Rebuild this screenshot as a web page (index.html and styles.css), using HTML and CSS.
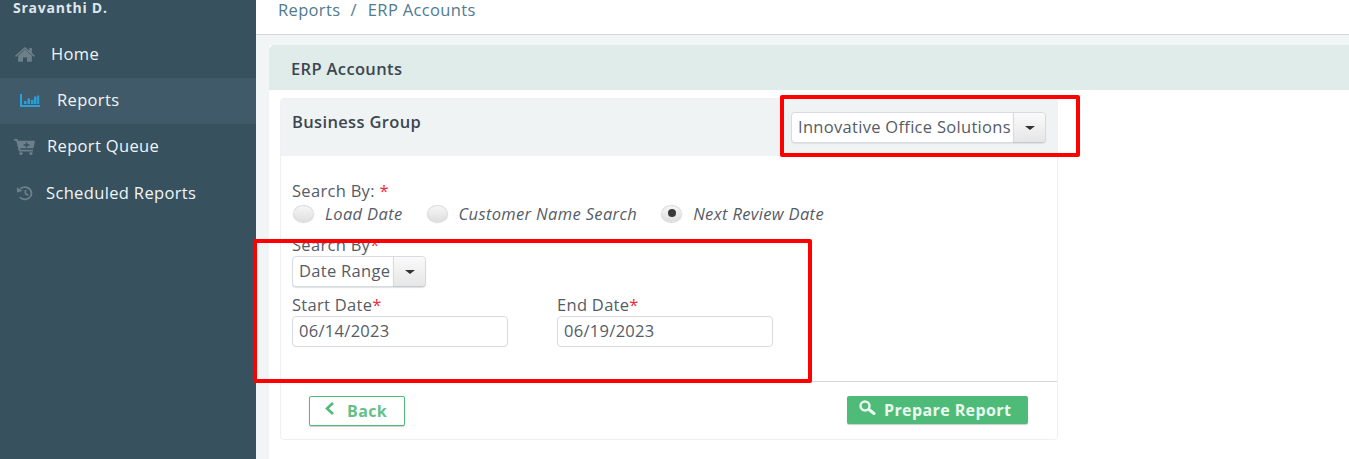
FILE: index.html
```html
<!DOCTYPE html>
<html lang="en">
<head>
<meta charset="utf-8">
<title>ERP Accounts</title>
<link rel="stylesheet" href="styles.css">
</head>
<body>
<div class="app">
  <aside class="sidebar">
    <div class="user">Sravanthi D.</div>
    <nav class="nav">
      <a class="nav-item item-home">
        <svg class="nav-icon" width="20" height="15" viewBox="0 0 23 16" preserveAspectRatio="none"><path fill="#6d7f89" d="M11.5 2.6 3.6 9.2v5.6c0 .5.4.9.9.9h4.7v-4.4h4.6v4.4h4.700c.5 0 .9-.4.9-.9V9.2z"/><path fill="#6d7f89" d="M11.5 0 0 9.4l1.1 1.3 10.4-8.6 10.4 8.6L23 9.4l-3.6-3V1h-3v2.9z"/></svg>
        <span>Home</span>
      </a>
      <a class="nav-item item-reports active">
        <svg class="nav-icon" width="20" height="13" viewBox="0 0 20 13"><path fill="#2a9fd8" d="M0 0h2v11H20v2H0z"/><path fill="#2a9fd8" d="M4 7h2.500v3H4zM7.500 4.500H10V10H7.500zM11 6h2.500v4H11zM14 2.500h2.500V10H14zM17.200 1.500h2V10h-2z"/></svg>
        <span>Reports</span>
      </a>
      <a class="nav-item item-queue">
        <svg class="nav-icon" width="21" height="16" viewBox="0 0 21 18" preserveAspectRatio="none"><path fill="#6d7f89" fill-rule="evenodd" d="M0 0h3.500l.7 2H21l-1.500 8.500H6.200l.3 1.500H19v2H5L2.200 2H0zM11.800 4v2H9.700v1.500h2.100v2h1.500v-2h2.100V6h-2.100V4z"/><circle fill="#6d7f89" cx="7" cy="16.300" r="1.700"/><circle fill="#6d7f89" cx="17" cy="16.300" r="1.700"/></svg>
        <span>Report Queue</span>
      </a>
      <a class="nav-item item-sched">
        <svg class="nav-icon" width="18" height="15" viewBox="0 0 19 17" preserveAspectRatio="none"><path fill="none" stroke="#6d7f89" stroke-width="2" d="M4.500 3.200A7 7 0 1 1 4 12.800"/><path fill="#6d7f89" d="M1 1.500 7 5.800 1 7.500z"/><path fill="none" stroke="#6d7f89" stroke-width="1.800" d="M10 4.500v4.200l3 1.800"/></svg>
        <span>Scheduled Reports</span>
      </a>
    </nav>
  </aside>
  <main class="main">
    <div class="crumbs"><span>Reports</span><span class="sep">/</span><span>ERP Accounts</span></div>
    <div class="content">
      <section class="panel">
        <h1 class="panel-title">ERP Accounts</h1>
        <div class="panel-body">
          <div class="card">
            <header class="card-head">
              <h2 class="card-title">Business Group</h2>
              <div class="select select-group"><span class="select-value">Innovative Office Solutions</span><span class="select-btn"><i class="caret"></i></span></div>
            </header>
            <div class="card-body">
              <div class="label">Search By: <b class="req">*</b></div>
              <div class="radios">
                <label class="radio"><i class="dot"></i><em>Load Date</em></label>
                <label class="radio"><i class="dot"></i><em>Customer Name Search</em></label>
                <label class="radio"><i class="dot on"></i><em>Next Review Date</em></label>
              </div>
              <div class="label label-by">Search By<b class="req">*</b></div>
              <div class="select select-range"><span class="select-value">Date Range</span><span class="select-btn"><i class="caret"></i></span></div>
              <div class="dates">
                <div class="field">
                  <div class="label">Start Date<b class="req">*</b></div>
                  <div class="input">06/14/2023</div>
                </div>
                <div class="field">
                  <div class="label">End Date<b class="req">*</b></div>
                  <div class="input">06/19/2023</div>
                </div>
              </div>
            </div>
            <footer class="card-foot">
              <button class="btn btn-back"><svg class="btn-icon" width="11" height="13" viewBox="0 0 11 13"><path fill="none" stroke="#4fbb78" stroke-width="2.600" d="M9 1 3 6.500 9 12"/></svg><span>Back</span></button>
              <button class="btn btn-go"><svg class="btn-icon" width="19" height="15" viewBox="0 0 19 15"><circle cx="7" cy="6" r="4.500" fill="none" stroke="#eafbf0" stroke-width="2.400"/><path stroke="#eafbf0" stroke-width="3" stroke-linecap="round" d="M11 9.500l5 4"/></svg><span>Prepare Report</span></button>
            </footer>
          </div>
        </div>
      </section>
    </div>
  </main>
</div>
<div class="mark mark-top"></div>
<div class="mark mark-form"></div>
</body>
</html>
```

FILE: styles.css
```css
* { box-sizing: border-box; }
html, body { margin: 0; height: 459px; overflow: hidden; }
body { font-family: "Open Sans", "Liberation Sans", sans-serif; color: #555c66; background: #fff; position: relative; }
.app { display: flex; height: 459px; }

.sidebar { width: 256px; flex: none; background: #37515f; color: #f1f5f7; }
.user { height: 32px; padding: 1px 0 0 13px; font-size: 14px; font-weight: 700; letter-spacing: .75px; line-height: 14px; color: #dfe6ea; }
.nav-item { display: flex; align-items: center; height: 46px; padding-bottom: 4px; font-size: 16.500px; letter-spacing: .35px; }
.nav-item .nav-icon { margin-top: 2px; }
.nav-item.active { background: #415a69; }
.item-home { padding-left: 15px; gap: 16px; }
.item-reports { padding-left: 20px; gap: 17px; }
.item-queue { padding-left: 14px; gap: 12px; padding-bottom: 3px; }
.item-sched { padding-left: 16px; gap: 12px; padding-bottom: 2px; }

.main { flex: 1; display: flex; flex-direction: column; min-width: 0; }
.crumbs { height: 35px; flex: none; border-bottom: 1px solid #d5d9de; padding: 0 0 0 22px; font-size: 16.500px; line-height: 20px; letter-spacing: .35px; color: #4f7a90; display: flex; }
.sep { margin: 0 11px 0 10px; }
.content { flex: 1; background: #f2f5f6; padding: 10px 0 0 13px; }
.panel { background: #fff; height: 100%; }
.panel-title { margin: 0; height: 45px; padding-left: 22px; background: #e0ecea; border-radius: 5px 0 0 0; font-size: 16.500px; line-height: 48px; font-weight: 600; color: #3c4650; letter-spacing: .35px; }
.panel-body { padding: 8px 0 0 11px; }

.card { width: 778px; height: 342px; border: 1px solid #eef0f2; border-radius: 4px; display: flex; flex-direction: column; }
.card-head { height: 57px; flex: none; background: #f0f3f4; padding: 0 11px 0 11px; display: flex; justify-content: space-between; align-items: flex-start; }
.card-title { margin: 14px 0 0; font-size: 16.500px; line-height: 17px; font-weight: 600; color: #3c4650; letter-spacing: .35px; }

.select { display: inline-flex; height: 31px; background: #fff; border: 1px solid #d8dbdf; border-radius: 4px; font-size: 16.500px; line-height: 28px; color: #555c66; letter-spacing: .3px; box-shadow: 0 1px 1px #dfe1e4; }
.select-group { margin-top: 13px; width: 255px; }
.select-range { width: 134px; }
.select-value { flex: 1; padding-left: 6px; white-space: nowrap; }
.select-btn { width: 32px; flex: none; background: linear-gradient(#fafafa, #e6e6e6); border-left: 1px solid #d8dbdf; border-radius: 0 4px 4px 0; display: flex; align-items: center; justify-content: center; box-shadow: 0 1px 1px #c6c9cc; }
.caret { width: 0; height: 0; border-left: 5px solid transparent; border-right: 5px solid transparent; border-top: 4px solid #333; }

.card-body { flex: 1; padding: 25px 11px 0; }
.label { font-size: 16.500px; line-height: 20px; letter-spacing: .3px; color: #555c66; white-space: nowrap; }
.req { color: #f0293b; font-weight: 400; }
.radios { display: flex; height: 24px; align-items: center; padding-left: 1px; }
.radio { display: flex; align-items: center; margin-right: 24px; font-size: 16.500px; letter-spacing: .35px; }
.radio em { color: #555c66; }
.dot { width: 21px; height: 17px; border-radius: 50%; margin-right: 11px; background: linear-gradient(#f6f6f6, #e0e0e0); border: 1px solid #dcdcdc; box-shadow: 0 1px 1px #d4d4d4; display: flex; align-items: center; justify-content: center; }
.dot.on::after { content: ""; width: 8px; height: 8px; border-radius: 50%; background: #3a3a3a; }
.label-by { margin-top: 13px; height: 18px; line-height: 13px; }
.dates { display: flex; gap: 49px; margin-top: 8px; }
.field { width: 216px; }
.field .label { height: 21px; line-height: 20px; }
.input { height: 31px; border: 1px solid #d8dbdf; border-radius: 4px; padding-left: 6px; font-size: 16.500px; line-height: 28px; letter-spacing: .3px; color: #555c66; }

.card-foot { height: 58px; flex: none; border-top: 1px solid #d5d8dc; padding: 14px 29px 0 28px; display: flex; justify-content: space-between; align-items: flex-start; }
.btn { font-family: inherit; font-weight: 700; font-size: 16px; letter-spacing: .4px; border-radius: 2px; display: flex; align-items: center; padding: 0; }
.btn-icon { margin-bottom: 5px; }
.btn-back { width: 96px; height: 30px; background: #fff; border: 1px solid #4fbb78; color: #64bf88; padding-left: 14px; gap: 12px; box-shadow: 0 1px 1px #ccc; }
.btn-go { width: 181px; height: 28px; background: #4fbb78; border: 0; color: #eafbf0; padding-left: 11px; gap: 7px; box-shadow: 0 1px 1px #ccc; }

.mark { position: absolute; border: 4px solid #fe0000; border-radius: 2px; pointer-events: none; }
.mark-top { left: 780px; top: 95px; width: 300px; height: 62px; }
.mark-form { left: 253px; top: 239px; width: 559px; height: 144px; }
```
